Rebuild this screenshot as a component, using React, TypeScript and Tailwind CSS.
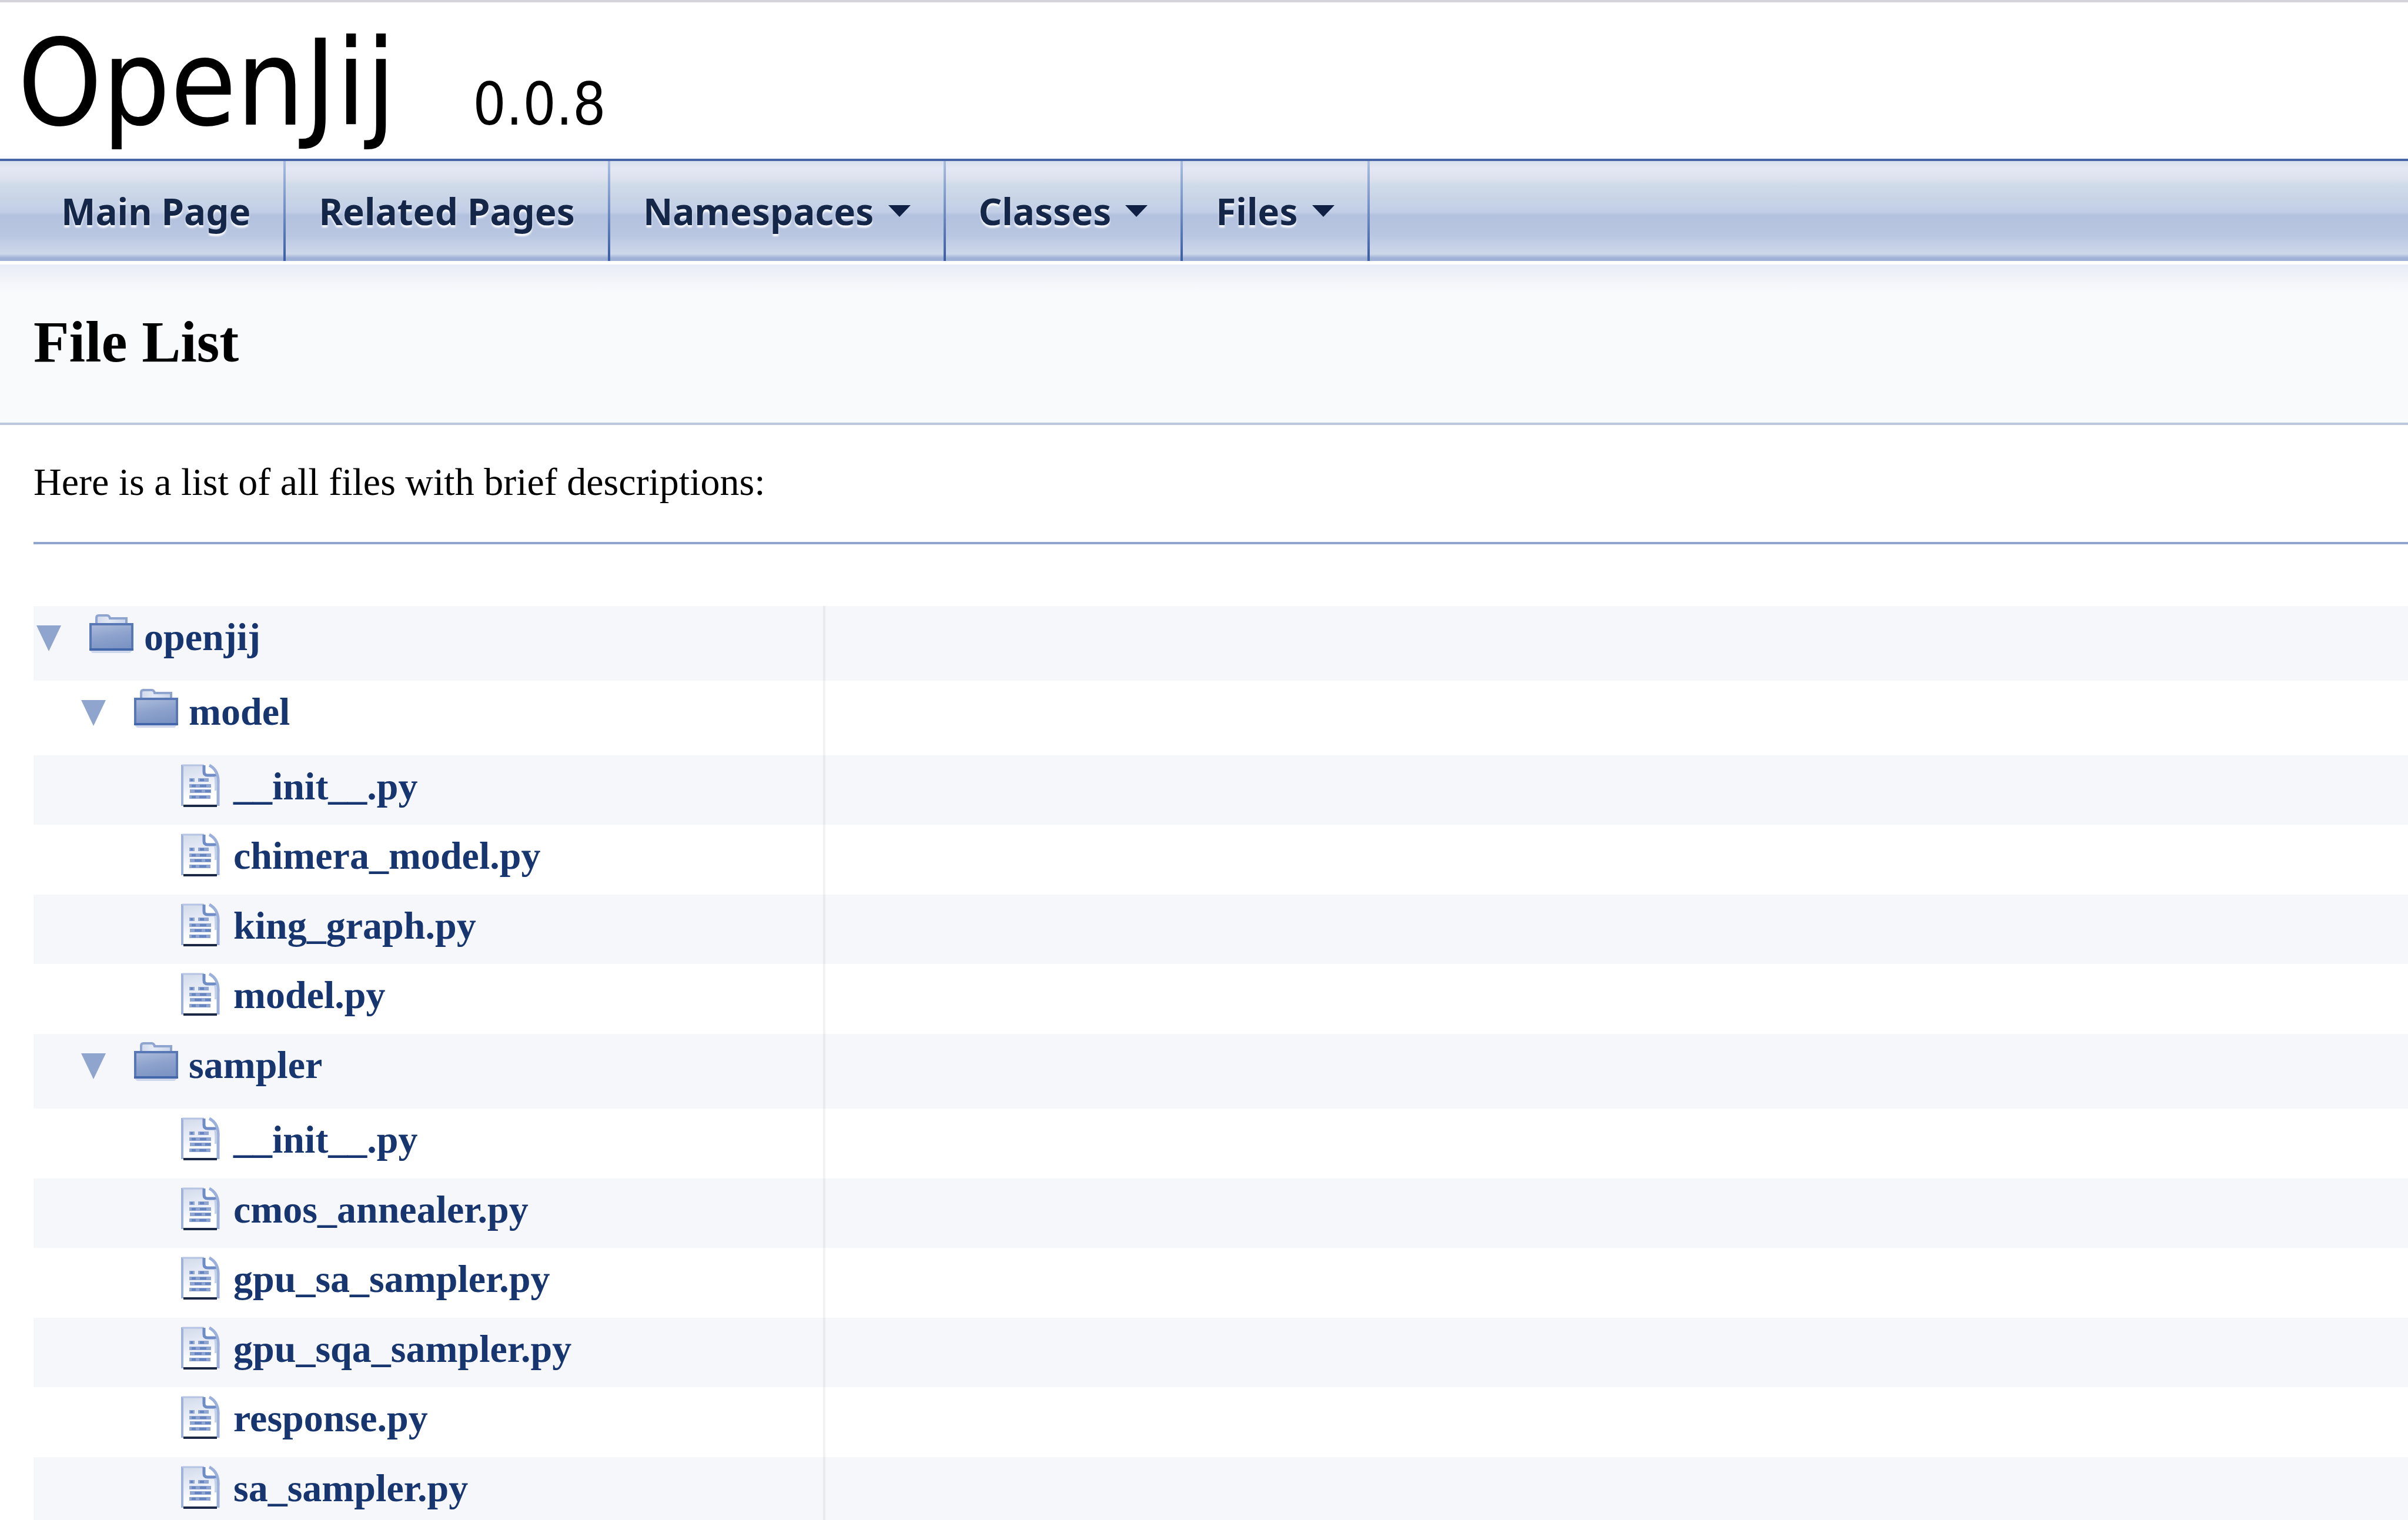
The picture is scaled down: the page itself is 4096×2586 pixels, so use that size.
const sans = "font-['Noto_Sans','Open_Sans',sans-serif]";

const menu = [
  { label: "Main Page", sub: false },
  { label: "Related Pages", sub: false },
  { label: "Namespaces", sub: true },
  { label: "Classes", sub: true },
  { label: "Files", sub: true },
];

type Entry = { name: string; level: 0 | 1 | 2; folder: boolean };

const entries: Entry[] = [
  { name: "openjij", level: 0, folder: true },
  { name: "model", level: 1, folder: true },
  { name: "__init__.py", level: 2, folder: false },
  { name: "chimera_model.py", level: 2, folder: false },
  { name: "king_graph.py", level: 2, folder: false },
  { name: "model.py", level: 2, folder: false },
  { name: "sampler", level: 1, folder: true },
  { name: "__init__.py", level: 2, folder: false },
  { name: "cmos_annealer.py", level: 2, folder: false },
  { name: "gpu_sa_sampler.py", level: 2, folder: false },
  { name: "gpu_sqa_sampler.py", level: 2, folder: false },
  { name: "response.py", level: 2, folder: false },
  { name: "sa_sampler.py", level: 2, folder: false },
];

const indent = { 0: "pl-0", 1: "pl-[76px]", 2: "pl-[152px]" };

function Caret() {
  return (
    <svg viewBox="0 0 38 20" className="h-5 w-[38px]" aria-hidden="true">
      <path d="M0 0H38L19 20Z" fill="#0f2044" />
    </svg>
  );
}

function FolderIcon() {
  return (
    <svg viewBox="0 0 112 104" className="h-[104px] w-[112px] shrink-0" aria-hidden="true">
      <defs>
        <linearGradient id="folderBody" x1="0.2" y1="0" x2="0.5" y2="1">
          <stop offset="0" stopColor="#a9b9da" />
          <stop offset="0.5" stopColor="#8da2cc" />
          <stop offset="1" stopColor="#7c94c4" />
        </linearGradient>
        <linearGradient id="folderTab" x1="0" y1="0" x2="1" y2="0">
          <stop offset="0" stopColor="#cfd9ec" />
          <stop offset="0.4" stopColor="#e3e9f5" />
          <stop offset="1" stopColor="#c9d4ea" />
        </linearGradient>
      </defs>
      <path d="M20 76H92L88 80H24Z" fill="#cdd6ea" />
      <path
        d="M31 31V20Q31 16 35 16H49Q53 16 54 21H82V31Z"
        fill="url(#folderTab)"
        stroke="#8fa5d0"
        strokeWidth="4"
      />
      <rect x="21" y="31" width="71" height="43" fill="url(#folderBody)" stroke="#5878b5" strokeWidth="4" />
      <path d="M19 74H94" stroke="#4466aa" strokeWidth="4" />
    </svg>
  );
}

function FileIcon() {
  return (
    <svg viewBox="0 0 112 104" className="h-[104px] w-[112px] shrink-0" aria-hidden="true">
      <defs>
        <linearGradient id="filePage" x1="0.2" y1="0" x2="0.45" y2="1">
          <stop offset="0" stopColor="#d3dcec" />
          <stop offset="0.45" stopColor="#eaeef7" />
          <stop offset="0.8" stopColor="#ffffff" />
        </linearGradient>
      </defs>
      <path d="M25 18H62V33H80L86 42V85H25Z" fill="url(#filePage)" />
      <path d="M62 17H72L86 36H66Q62 36 62 31Z" fill="#ffffff" />
      <path d="M25 16V86" stroke="#9fb2da" strokeWidth="4" />
      <path d="M25 17H62" stroke="#b5c4e2" strokeWidth="3" />
      <path d="M62 17V28Q62 34 68 34H83" fill="none" stroke="#6f8cc6" strokeWidth="5" />
      <path d="M71 17Q79 21 83 29T86 50V86" fill="none" stroke="#9bb0da" strokeWidth="5" />
      <path d="M81 36Q83 44 82 60" fill="none" stroke="#c3cfe8" strokeWidth="4" />
      <g stroke="#8ea5d2" strokeWidth="6">
        <path d="M37 42H46M52 42H70" />
        <path d="M37 52H74" />
        <path d="M38 61H74" />
        <path d="M37 71H73" />
      </g>
      <g stroke="#6685c0" strokeWidth="4">
        <path d="M39 42H43M55 42H62" />
        <path d="M41 52H48M55 52H66" />
        <path d="M46 61H58M64 61H73" />
        <path d="M41 71H48M54 71H66" />
      </g>
      <path d="M27 86H84" stroke="#1b2846" strokeWidth="4" />
    </svg>
  );
}

function Row({ entry }: { entry: Entry }) {
  return (
    <tr
      className={
        entry.folder
          ? "h-[127px] odd:bg-[#f5f7fb]"
          : "h-[119px] odd:h-[118px] odd:bg-[#f5f7fb]"
      }
    >
      <td className="p-0 align-top">
        <div className={"flex items-start " + indent[entry.level]}>
          {entry.folder ? (
            <button type="button" aria-label={"Collapse " + entry.name} className="h-[104px] w-[76px] shrink-0">
              <svg viewBox="0 0 76 104" className="h-[104px] w-[76px]" aria-hidden="true">
                <path d="M5 33H47L26 77Z" fill="#90a5ce" />
              </svg>
            </button>
          ) : (
            <span className="w-[76px] shrink-0" />
          )}
          {entry.folder ? <FolderIcon /> : <FileIcon />}
          <a href="#" className="text-[66px] leading-[106px] font-bold whitespace-nowrap text-[#17356f]">
            {entry.name}
          </a>
        </div>
      </td>
      <td className="border-l-4 border-black/5 p-0" />
    </tr>
  );
}

export default function App() {
  return (
    <div className="h-screen overflow-hidden bg-white font-['Liberation_Serif',serif] text-black">
      <header className="flex items-baseline gap-[131px] border-t-4 border-[#d5d4da] pt-[18px] pb-2 pl-[30px] font-['DejaVu_Sans_Condensed','DejaVu_Sans',sans-serif]">
        <h1 className="text-[203px] leading-[240px]">OpenJij</h1>
        <span className="text-[99px] leading-[120px]">0.0.8</span>
      </header>

      <nav className="border-t-4 border-[#4665a6] bg-[linear-gradient(to_bottom,#d8e0ec_0%,#e4e8f4_8%,#dce1ed_18%,#d0dbe9_24%,#c8d4e6_38%,#c2cee6_51%,#b2c1de_54%,#b9c6e1_74%,#c3cfe6_83%,#cdd7e9_93%,#9fb1d5_97%,#9fb1d5_100%)] pl-12">
        <ul className={"flex h-[170px] " + sans}>
          {menu.map((item) => (
            <li key={item.label} className="flex">
              <a
                href="#"
                className="flex items-center gap-6 px-14 text-[62px] leading-[80px] font-bold whitespace-nowrap text-[#152748] [text-shadow:0_4px_3px_rgba(255,255,255,0.9)]"
              >
                {item.label}
                {item.sub && <Caret />}
              </a>
              <span className="w-1 bg-linear-to-b from-[#a9bde0] to-[#3a5ca2]" />
            </li>
          ))}
        </ul>
      </nav>

      <div className="mt-1.5 border-b-4 border-[#bcc8e1] bg-[linear-gradient(to_bottom,#e8ecf6_0px,#f9fafc_48px)] pt-19 pb-[81px] pl-[57px]">
        <h2 className="text-[99px] leading-[112px] font-bold">File List</h2>
      </div>

      <main className="pt-[59px] pl-[57px]">
        <p className="text-[66px] leading-[76px]">Here is a list of all files with brief descriptions:</p>
        <hr className="mt-16 mb-[105px] border-t-4 border-[#90a5ce]" />
        <table className="w-full table-fixed border-collapse">
          <colgroup>
            <col className="w-[1345px]" />
            <col />
          </colgroup>
          <tbody>
            {entries.map((entry, i) => (
              <Row key={i} entry={entry} />
            ))}
          </tbody>
        </table>
      </main>
    </div>
  );
}
